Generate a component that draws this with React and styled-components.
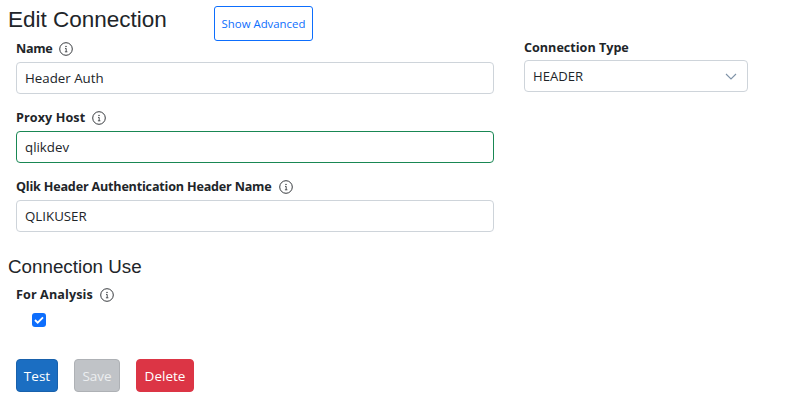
import React from 'react';
import styled, { createGlobalStyle } from 'styled-components';

const Global = createGlobalStyle`
  html, body { margin: 0; padding: 0; background: #fff; }
  body { font-family: "Open Sans", "Noto Sans", sans-serif; color: #212529; }
`;

const Page = styled.div`
  width: 786px;
  height: 405px;
  overflow: hidden;
  padding: 6px 0 0 8px;
  box-sizing: border-box;
`;

const TitleRow = styled.div`
  display: flex;
  align-items: flex-start;
  height: 31px;
`;

const Title = styled.h1`
  margin: 0;
  width: 206px;
  font: 400 22.5px/28px "Liberation Sans", Arial, sans-serif;
  color: #212529;
`;

const AdvancedButton = styled.button`
  flex: none;
  width: 99px;
  height: 35px;
  padding: 0;
  background: #fff;
  border: 1px solid #0d6efd;
  border-radius: 3px;
  color: #0d6efd;
  font: 400 11.4px "Open Sans", sans-serif;
`;

const Columns = styled.div`
  display: flex;
  gap: 30px;
  padding-left: 8px;
`;

const LeftColumn = styled.div`
  width: 478px;
  padding-top: 1px;
  display: flex;
  flex-direction: column;
  gap: 13px;
`;

const RightColumn = styled.div`
  width: 224px;
`;

const Field = styled.div`
  display: flex;
  flex-direction: column;
`;

const Label = styled.div`
  display: flex;
  align-items: center;
  gap: 7px;
  height: 21px;
  margin-bottom: 3px;
  font: 700 12.6px/21px "Open Sans", sans-serif;
  letter-spacing: ${(p) => p.$tracking || 0}px;
  color: #212529;
`;

const TypeLabel = styled(Label)`
  margin-bottom: 2px;
`;

const Input = styled.input`
  box-sizing: border-box;
  width: 100%;
  height: 32px;
  padding: 0 8px;
  background: #fff;
  border: 1px solid ${(p) => (p.$valid ? '#198754' : '#ced4da')};
  border-radius: 4px;
  font: 400 13.3px "Open Sans", sans-serif;
  color: #212529;
  outline: none;
`;

const SelectBox = styled.div`
  box-sizing: border-box;
  display: flex;
  align-items: center;
  justify-content: space-between;
  height: 32px;
  padding: 0 10px 0 8px;
  border: 1px solid #ced4da;
  border-radius: 4px;
  font: 400 13.1px "Open Sans", sans-serif;
  color: #212529;
`;

const Section = styled.h2`
  margin: 24px 0 0;
  font: 400 18.8px/22px "Liberation Sans", Arial, sans-serif;
  color: #212529;
`;

const UseField = styled.div`
  padding: 6px 0 0 8px;
`;

const CheckRow = styled.div`
  display: flex;
  padding: 5px 0 0 16px;
`;

const Check = styled.span`
  display: flex;
  align-items: center;
  justify-content: center;
  width: 14px;
  height: 14px;
  background: #0d6efd;
  border-radius: 3px;
`;

const Actions = styled.div`
  display: flex;
  gap: 16px;
  margin-top: 32px;
  padding-left: 8px;
`;

const ActionButton = styled.button`
  box-sizing: border-box;
  width: ${(p) => p.$width}px;
  height: 33px;
  padding: 0;
  background: ${(p) => p.$bg};
  border: 1px solid ${(p) => p.$border};
  border-radius: 4px;
  color: ${(p) => p.$color || '#fff'};
  font: 400 13.5px "Open Sans", sans-serif;
`;

const InfoIcon = () => (
  <svg width="14" height="14" viewBox="0 0 14 14" fill="none">
    <circle cx="7" cy="7" r="6.3" stroke="#212529" strokeWidth="0.9" />
    <circle cx="7" cy="4.4" r="0.7" fill="#212529" />
    <path d="M6 6.4H7.2V9.7M5.9 9.8H8.4" stroke="#212529" strokeWidth="0.8" />
  </svg>
);

const Chevron = () => (
  <svg width="12" height="7" viewBox="0 0 12 7" fill="none">
    <path d="M1 1l5 5 5-5" stroke="#7f93a8" strokeWidth="1.1" />
  </svg>
);

const FormField = ({ label, value, valid, tracking }) => (
  <Field>
    <Label $tracking={tracking}>
      {label} <InfoIcon />
    </Label>
    <Input defaultValue={value} $valid={valid} />
  </Field>
);

export default function App() {
  return (
    <Page>
      <Global />
      <TitleRow>
        <Title>Edit Connection</Title>
        <AdvancedButton>Show Advanced</AdvancedButton>
      </TitleRow>
      <Columns>
        <LeftColumn>
          <FormField label="Name" value="Header Auth" tracking={-0.3} />
          <FormField label="Proxy Host" value="qlikdev" tracking={0.1} valid />
          <FormField label="Qlik Header Authentication Header Name" value="QLIKUSER" tracking={-0.2} />
        </LeftColumn>
        <RightColumn>
          <TypeLabel>Connection Type</TypeLabel>
          <SelectBox>
            HEADER
            <Chevron />
          </SelectBox>
        </RightColumn>
      </Columns>
      <Section>Connection Use</Section>
      <UseField>
        <Label $tracking={0.1}>
          For Analysis <InfoIcon />
        </Label>
        <CheckRow>
          <Check>
            <svg width="10" height="8" viewBox="0 0 10 8" fill="none">
              <path d="M1 4l2.7 2.7L9 1.3" stroke="#fff" strokeWidth="1.8" />
            </svg>
          </Check>
        </CheckRow>
      </UseField>
      <Actions>
        <ActionButton $width={42} $bg="#1b6ec2" $border="#1861ac">Test</ActionButton>
        <ActionButton $width={46} $bg="#c0c3c7" $border="#aeb1b5" $color="#eceef0">Save</ActionButton>
        <ActionButton $width={58} $bg="#dc3545" $border="#dc3545">Delete</ActionButton>
      </Actions>
    </Page>
  );
}
